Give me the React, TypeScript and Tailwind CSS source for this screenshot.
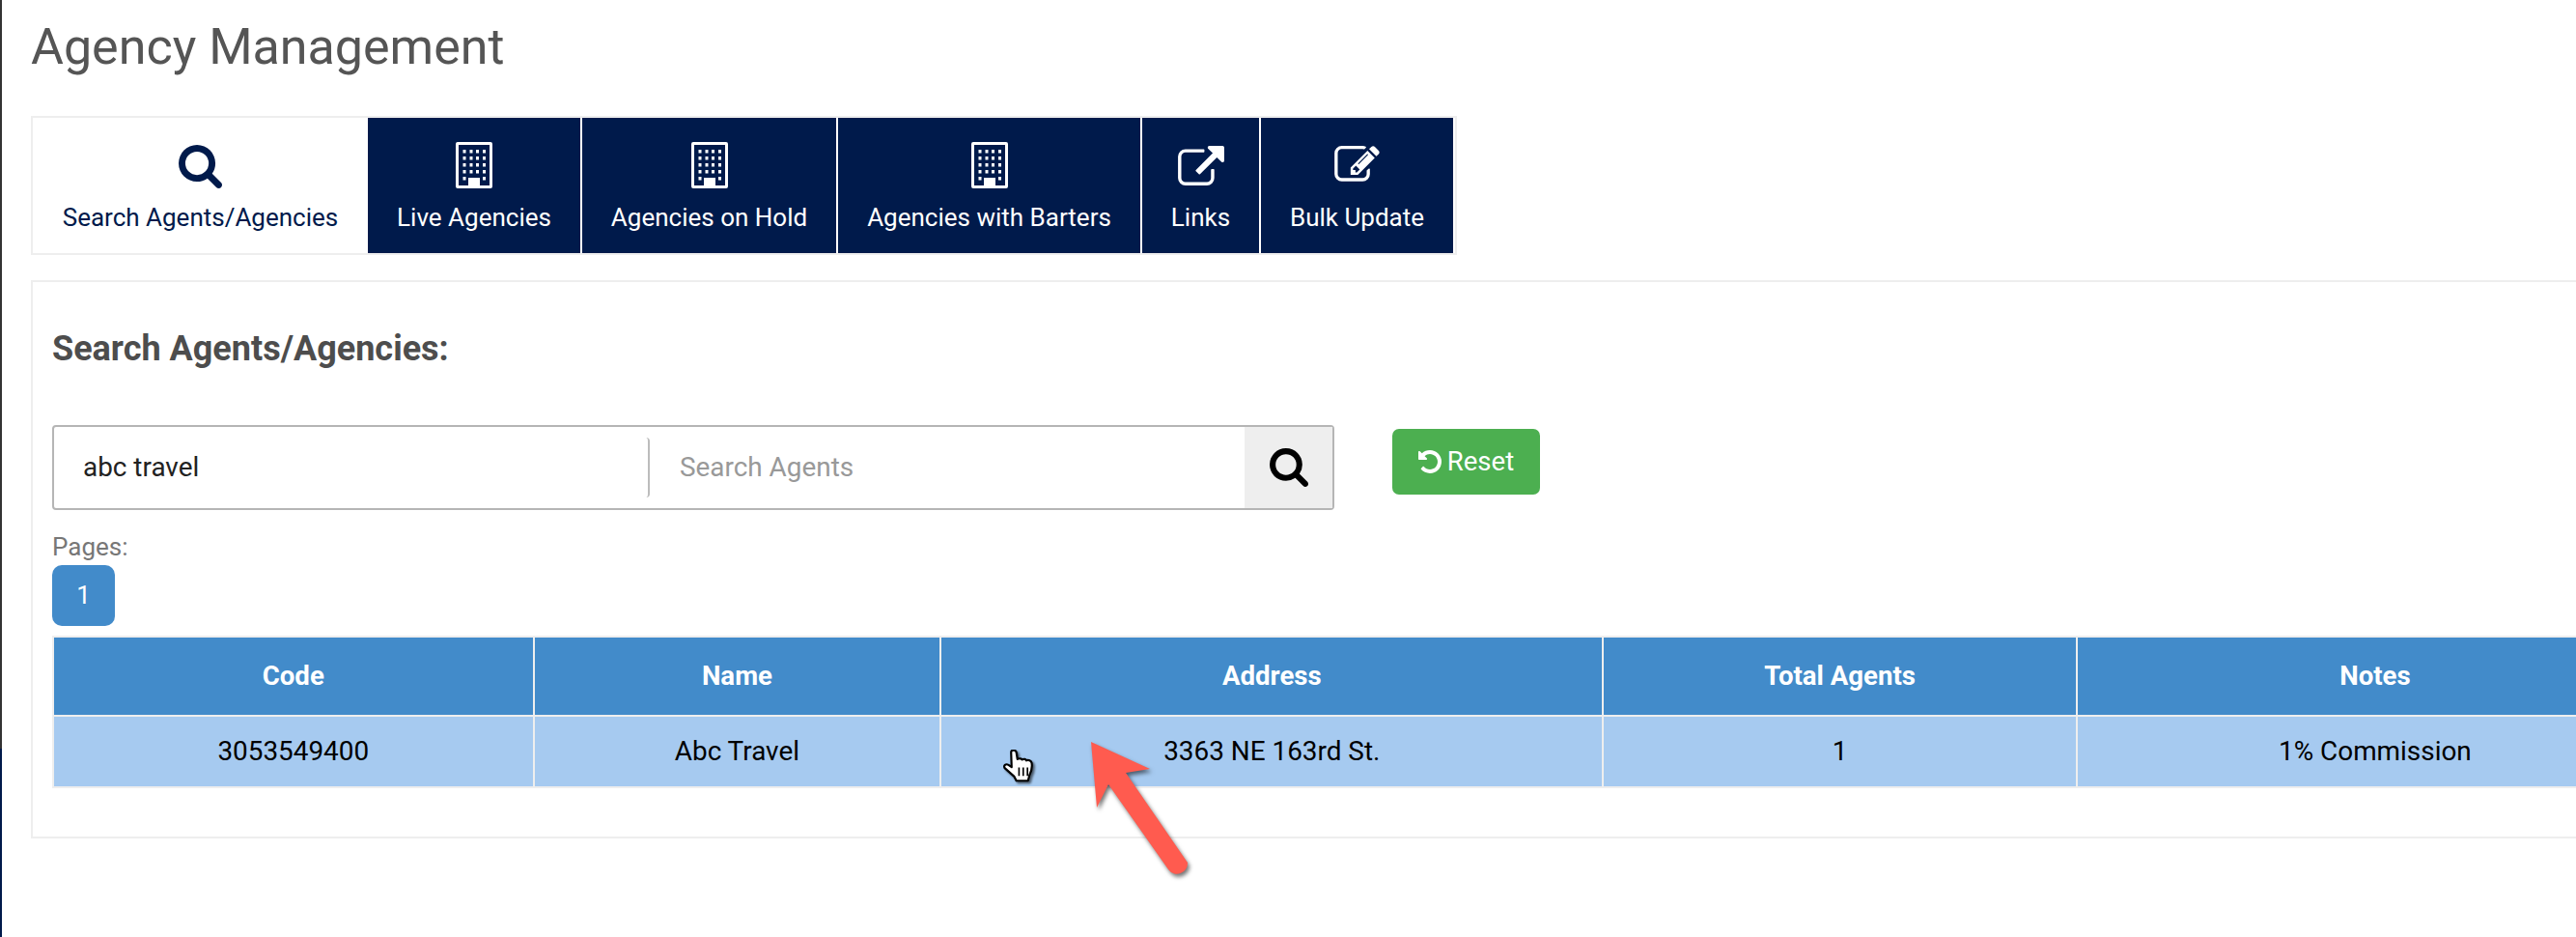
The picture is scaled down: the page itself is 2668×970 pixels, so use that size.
const navy = '#001a4b'

function SearchIcon({ className }: { className: string }) {
  return (
    <svg viewBox="64 128 1664 1664" className={className} fill="currentColor">
      <path d="M1216 832q0-185-131.5-316.5t-316.5-131.5-316.5 131.5-131.5 316.5 131.5 316.5 316.5 131.5 316.5-131.5 131.5-316.5zm512 832q0 52-38 90t-90 38q-54 0-90-38l-343-342q-179 124-399 124-143 0-273.5-55.5t-225-150-150-225-55.5-273.5 55.5-273.5 150-225 225-150 273.5-55.5 273.5 55.5 225 150 150 225 55.5 273.5q0 220-124 399l343 343q37 37 37 90z" />
    </svg>
  )
}

function BuildingIcon() {
  const rows = [8, 15, 22, 29]
  const cols = [7.5, 14.5, 21, 28]
  return (
    <svg viewBox="0 0 38 48" className="w-[38px] h-[48px]" fill="white">
      <path fillRule="evenodd" d="M2 0h34a2 2 0 0 1 2 2v44a2 2 0 0 1-2 2H2a2 2 0 0 1-2-2V2a2 2 0 0 1 2-2zM3 3v42h10V37h12v8h10V3z" />
      {rows.map((y) => cols.map((x) => <rect key={`${x}-${y}`} x={x} y={y} width="3" height="3.5" />))}
      <rect x="7.5" y="36" width="3" height="3.5" />
      <rect x="28" y="36" width="3" height="3.5" />
    </svg>
  )
}

function LinkIcon() {
  return (
    <svg viewBox="0 0 1792 1536" className="w-[48px] h-[41px]" fill="white">
      <path d="M1408 928v320q0 119-84.5 203.5t-203.5 84.5h-832q-119 0-203.5-84.5t-84.5-203.5v-832q0-119 84.5-203.5t203.5-84.5h704q14 0 23 9t9 23v64q0 14-9 23t-23 9h-704q-66 0-113 47t-47 113v832q0 66 47 113t113 47h832q66 0 113-47t47-113v-320q0-14 9-23t23-9h64q14 0 23 9t9 23zm384-864v512q0 26-19 45t-45 19-45-19l-176-176-652 652q-10 10-23 10t-23-10l-114-114q-10-10-10-23t10-23l652-652-176-176q-19-19-19-45t19-45 45-19h512q26 0 45 19t19 45z" />
    </svg>
  )
}

function EditIcon() {
  return (
    <svg viewBox="0 128 1792 1536" className="w-[47px] h-[40px]" fill="white">
      <path d="M888 1184l116-116-152-152-116 116v56h96v96h56zm440-720q-16-16-33 1l-350 350q-17 17-1 33t33-1l350-350q17-17 1-33zm80 594v190q0 119-84.5 203.5t-203.5 84.5h-832q-119 0-203.5-84.5t-84.5-203.5v-832q0-119 84.5-203.5t203.5-84.5h832q63 0 117 25 15 7 18 23 3 17-9 29l-49 49q-14 14-32 8-23-6-45-6h-832q-66 0-113 47t-47 113v832q0 66 47 113t113 47h832q66 0 113-47t47-113v-126q0-13 9-22l64-64q15-15 35-7t20 29zm-96-738l288 288-672 672h-288v-288zm444 132l-92 92-288-288 92-92q28-28 68-28t68 28l152 152q28 28 28 68t-28 68z" />
    </svg>
  )
}

function UndoIcon() {
  return (
    <svg viewBox="0 0 1536 1536" className="w-[24px] h-[24px]" fill="white">
      <path d="M1536 768q0 156-61 298t-164 245-245 164-298 61q-172 0-327-72.5t-264-204.500q-7-10-6.500-22.500t8.500-20.500l137-138q10-9 25-9 16 2 23 12 73 95 179 147t225 52q104 0 198.500-40.500t163.500-109.500 109.500-163.500 40.500-198.500-40.500-198.500-109.500-163.500-163.500-109.500-198.500-40.500q-98 0-188 35.500t-160 101.500l137 138q31 30 14 69-17 40-59 40h-448q-26 0-45-19t-19-45v-448q0-42 40-59 39-17 69 14l130 129q107-101 244.500-156.500t284.500-55.500q156 0 298 61t245 164 164 245 61 298z" />
    </svg>
  )
}

function Tab({ label, icon, width, active }: { label: string; icon: React.ReactNode; width: string; active?: boolean }) {
  return (
    <div
      className={`${width} h-[140px] flex flex-col items-center ${
        active ? 'bg-white text-[#001a4b]' : 'bg-[#001a4b] text-white'
      }`}
    >
      <div className="h-[48px] mt-[25px] flex items-center justify-center">{icon}</div>
      <div className="text-[26px] leading-[30px] mt-[15px] whitespace-nowrap">{label}</div>
    </div>
  )
}

const columns = [
  { label: 'Code', value: '3053549400', width: 'w-[497px]' },
  { label: 'Name', value: 'Abc Travel', width: 'w-[421px]' },
  { label: 'Address', value: '3363 NE 163rd St.', width: 'w-[686px]' },
  { label: 'Total Agents', value: '1', width: 'w-[490px]' },
  { label: 'Notes', value: '1% Commission', width: 'w-[618px]' },
]

export default function App() {
  return (
    <div className="relative flex h-[970px] w-[2668px] overflow-hidden bg-white font-['Roboto',sans-serif]">
      <div className="w-[2px] shrink-0 flex flex-col">
        <div className="h-[775px] bg-[#333333]" />
        <div className="flex-1" style={{ background: navy }} />
      </div>

      <div className="flex-1 pl-[30px]">
        <h1 className="pt-[19px] text-[52px] leading-[60px] text-[#555555]">Agency Management</h1>

        <div className="mt-[41px] w-[1477px] border-2 border-[#eeeeee] flex gap-[2px] bg-white">
          <Tab label="Search Agents/Agencies" width="w-[347px]" active icon={<SearchIcon className="w-[45px] h-[45px] mt-[2px]" />} />
          <div className="-ml-[2px] flex gap-[2px]">
            <Tab label="Live Agencies" width="w-[220px]" icon={<BuildingIcon />} />
            <Tab label="Agencies on Hold" width="w-[263px]" icon={<BuildingIcon />} />
            <Tab label="Agencies with Barters" width="w-[313px]" icon={<BuildingIcon />} />
            <Tab label="Links" width="w-[121px]" icon={<LinkIcon />} />
            <Tab label="Bulk Update" width="w-[199px]" icon={<EditIcon />} />
          </div>
        </div>

        <div className="mt-[26px] w-[2800px] h-[578px] border-2 border-[#eeeeee] pl-[20px] pt-[48px]">
          <h2 className="text-[36px] leading-[42px] font-bold text-[#4d4d4d]">Search Agents/Agencies:</h2>

          <div className="mt-[58px] flex items-start">
            <div className="w-[1328px] h-[88px] rounded-[4px] border-2 border-[#b5b5b5] flex items-center">
              <div className="w-[617px] h-[62px] pl-[30px] flex items-center text-[27.9px] text-[#222222] border-r-2 border-[#bcbcbc] rounded-r-[4px]">
                abc travel
              </div>
              <div className="flex-1 pl-[31px] text-[27.9px] text-[#999999]">Search Agents</div>
              <div className="w-[91px] h-[84px] bg-[#eeeeee] flex items-center justify-center text-black">
                <SearchIcon className="w-[40px] h-[40px]" />
              </div>
            </div>
            <div className="ml-[60px] mt-[4px] w-[153px] h-[68px] rounded-[7px] bg-[#4caf50] flex items-center justify-center gap-[6px] text-white text-[27.5px]">
              <UndoIcon />
              <span>Reset</span>
            </div>
          </div>

          <div className="mt-[23px] text-[26px] leading-[30px] text-[#777777]">Pages:</div>
          <div className="mt-[4px] w-[65px] h-[63px] rounded-[10px] bg-[#428bca] flex items-center justify-center text-white text-[26px]">
            1
          </div>

          <div className="mt-[10px] w-[2716px] border-2 border-[#eeeeee] bg-[#eeeeee] flex flex-col gap-[2px]">
            <div className="flex gap-[2px] h-[80px]">
              {columns.map((c) => (
                <div key={c.label} className={`${c.width} bg-[#428bca] flex items-center justify-center text-white font-bold text-[27.6px]`}>
                  {c.label}
                </div>
              ))}
            </div>
            <div className="flex gap-[2px] h-[72px]">
              {columns.map((c) => (
                <div key={c.label} className={`${c.width} bg-[#a6caf0] flex items-center justify-center text-black text-[27.9px]`}>
                  {c.value}
                </div>
              ))}
            </div>
          </div>
        </div>
      </div>

      {/* hand cursor */}
      <svg viewBox="0 0 32 32" className="absolute left-[1039px] top-[776px] w-[35px] h-[35px] drop-shadow-[2px_2px_1px_rgba(0,0,0,0.55)]">
        <path
          d="M7.5 2.5c0-2.5 4.5-2.500 5 0l1 6.500c2-1 4-.5 4.500.5 1.500-1 3.500-.5 4 .8 2-.8 4.500.2 5 2.200.5 3-.2 8-2 11.500l-1.500 5.500h-11l-2-4-9-8c-1.500-2.500 1-4.500 3.500-3l3 2z"
          fill="white"
          stroke="black"
          strokeWidth="2"
          strokeLinejoin="round"
        />
        <path d="M15 17v8M19 17v8M23 17v8" stroke="black" strokeWidth="1.500" />
      </svg>

      {/* annotation arrow */}
      <svg viewBox="0 0 120 150" className="absolute left-[1125px] top-[763px] w-[120px] h-[150px] drop-shadow-[2px_3px_2px_rgba(0,0,0,0.55)]">
        <path
          d="M5 5L66 33L41 37L105 130a11 11 0 0 1-20 7L23 49L11 73z"
          fill="#ff5b4f"
        />
      </svg>
    </div>
  )
}
